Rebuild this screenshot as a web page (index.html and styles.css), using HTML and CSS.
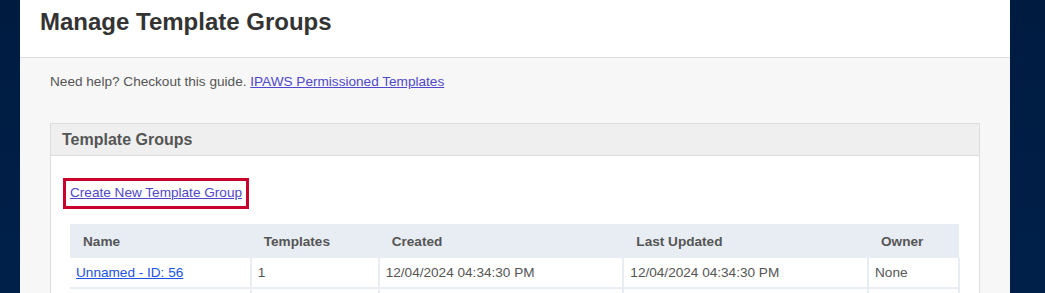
FILE: index.html
```html
<!DOCTYPE html>
<html>
<head>
<meta charset="utf-8">
<link rel="stylesheet" href="styles.css">
</head>
<body>
<div class="page">
  <div class="container">
    <header class="head">
      <h1>Manage Template Groups</h1>
    </header>
    <main class="content">
      <p class="help">Need help? Checkout this guide. <a href="#" class="guide">IPAWS Permissioned Templates</a></p>
      <section class="panel">
        <div class="panel-head">Template Groups</div>
        <div class="panel-body">
          <div class="create-wrap"><a href="#" class="create">Create New Template Group</a></div>
          <table class="groups">
            <thead>
              <tr>
                <th class="c-name">Name</th>
                <th class="c-tpl">Templates</th>
                <th class="c-created">Created</th>
                <th class="c-upd">Last Updated</th>
                <th class="c-owner">Owner</th>
              </tr>
            </thead>
            <tbody>
              <tr>
                <td><a href="#" class="row-link">Unnamed - ID: 56</a></td>
                <td>1</td>
                <td>12/04/2024 04:34:30 PM</td>
                <td>12/04/2024 04:34:30 PM</td>
                <td>None</td>
              </tr>
              <tr>
                <td>&nbsp;</td>
                <td>&nbsp;</td>
                <td>&nbsp;</td>
                <td>&nbsp;</td>
                <td>&nbsp;</td>
              </tr>
            </tbody>
          </table>
        </div>
      </section>
    </main>
  </div>
</div>
</body>
</html>
```

FILE: styles.css
```css
* { box-sizing: border-box; }
html, body { margin: 0; padding: 0; }
body {
  font-family: "Liberation Sans", Arial, sans-serif;
  background: linear-gradient(180deg, #001b40 0%, #00204a 100%);
  height: 293px;
  overflow: hidden;
}
.page {
  padding: 0 35px 0 20px;
}
.container {
  width: 990px;
  background: #f7f7f7;
  height: 293px;
  overflow: hidden;
}
.head {
  background: #fff;
  height: 58px;
  border-bottom: 1px solid #dddddd;
  padding: 0 20px;
  display: flex;
  align-items: center;
}
.head h1 {
  margin: 0 0 13px 0;
  font-size: 24px;
  line-height: 28px;
  font-weight: bold;
  color: #333;
}
.content {
  padding: 15px 30px 0 30px;
}
.help {
  margin: 0;
  font-size: 13.6px;
  color: #555;
  line-height: 18px;
}
.guide { color: #4f47cc; }
.panel {
  margin-top: 32px;
  border: 1px solid #dddddd;
  background: #fff;
  width: 930px;
}
.panel-head {
  background: #efefef;
  border-bottom: 1px solid #dddddd;
  height: 32px;
  padding: 0 11px;
  display: flex;
  align-items: center;
  font-size: 16px;
  font-weight: bold;
  color: #555;
}
.panel-body {
  padding: 22px 19px 0 19px;
}
.create-wrap { display: flex; }
.create {
  display: block;
  border: 3px solid #c8002b;
  padding: 3px 4px 4px 4px;
  font-size: 13.6px;
  line-height: 18px;
  color: #4f47cc;
  margin-left: -7px;
}
.groups {
  margin-top: 15px;
  width: 890px;
  border-collapse: collapse;
  font-size: 13.6px;
}
.groups th {
  background: #e8edf4;
  height: 34px;
  text-align: left;
  font-weight: bold;
  color: #555;
  padding: 0 13px;
}
.groups td {
  height: 30px;
  padding: 0 6px;
  color: #555;
  border: 2px solid #e8edf4;
  border-top: none;
}
.groups tr td:first-child { border-left: none; }
.c-name { width: 181px; }
.c-tpl { width: 128px; }
.c-created { width: 245px; }
.c-upd { width: 245px; }
.c-owner { width: 91px; }
.row-link { color: #1a53e6; }
```
